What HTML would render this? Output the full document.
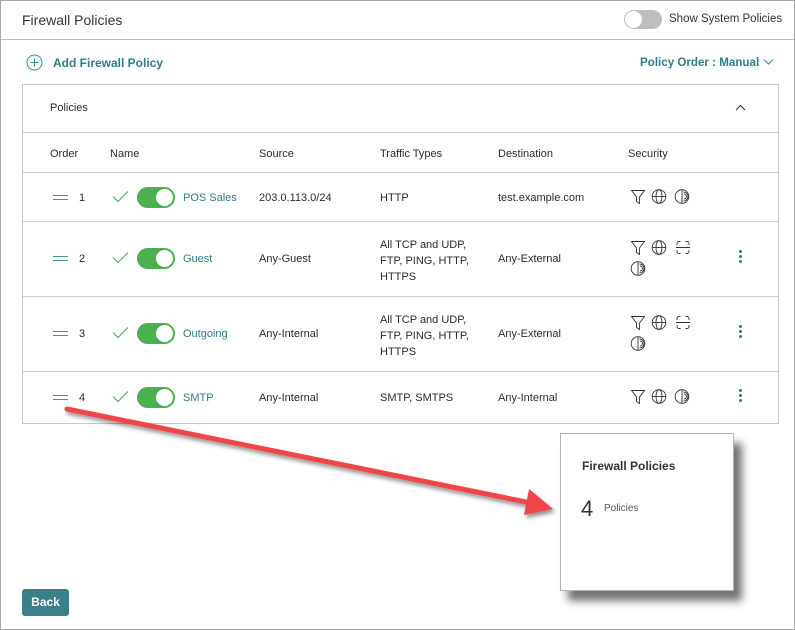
<!DOCTYPE html>
<html><head><meta charset="utf-8"><style>
*{margin:0;padding:0;box-sizing:border-box}
body{width:795px;height:630px;position:relative;background:#fff;font-family:"Liberation Sans",sans-serif;color:#2b2b2b;overflow:hidden}
.frame{position:absolute;left:0;top:0;width:795px;height:630px;border:1px solid #a8a8a8}
.a{position:absolute;white-space:nowrap}
.t{font-size:11px}
.teal{color:#2f7d88}
.hl{position:absolute;height:1px;background:#cfcfcf}
.tog{position:absolute;width:38px;height:21px;border-radius:11px;background:#4caf50}
.tog::after{content:"";position:absolute;right:2px;top:2px;width:17px;height:17px;border-radius:50%;background:#fff}
.drag{position:absolute;width:15px;height:5px;border-top:1.5px solid #4a94a0;border-bottom:1.5px solid #4a94a0}
.dots{position:absolute;width:3px}
.dots i{display:block;width:3px;height:3px;border-radius:50%;background:#2f7d88;margin-bottom:2px}
</style></head><body>
<div class="frame"></div>
<div class="a" style="left:22px;top:12px;font-size:14px;color:#333">Firewall Policies</div>
<div style="position:absolute;left:624px;top:10px;width:38px;height:19px;border-radius:10px;background:#bdbdbd"><div style="position:absolute;left:1px;top:1px;width:17px;height:17px;border-radius:50%;background:#fff"></div></div>
<div class="a t" style="left:669px;top:13px;font-size:11.5px;color:#333">Show System Policies</div>
<div class="hl" style="left:1px;top:39px;width:793px;background:#bdbdbd"></div>

<svg class="a" style="left:26px;top:54px" width="17" height="17"><circle cx="8.5" cy="8.5" r="7.5" fill="none" stroke="#3a8a95" stroke-width="1"/><path d="M8.5 4.5v8M4.5 8.5h8" stroke="#3a8a95" stroke-width="1"/></svg>
<div class="a teal" style="left:53px;top:56px;font-size:12px;font-weight:bold">Add Firewall Policy</div>
<div class="a teal" style="left:640px;top:56px;font-size:11.6px;font-weight:bold">Policy Order : Manual</div>
<svg class="a" style="left:763px;top:58px" width="11" height="8"><path d="M1 1.5l4.5 4.5 4.5-4.5" fill="none" stroke="#3a8a95" stroke-width="1.1"/></svg>

<div style="position:absolute;left:22px;top:84px;width:757px;height:340px;border:1px solid #c8c8c8"></div>
<div class="a t" style="left:50px;top:102px">Policies</div>
<svg class="a" style="left:735px;top:104px" width="11" height="8"><path d="M1 6l4.5-4.5 4.5 4.5" fill="none" stroke="#333" stroke-width="1.1"/></svg>
<div class="hl" style="left:23px;top:132px;width:755px"></div>
<div class="a t" style="left:50px;top:148px">Order</div>
<div class="a t" style="left:110px;top:148px">Name</div>
<div class="a t" style="left:259px;top:148px">Source</div>
<div class="a t" style="left:380px;top:148px">Traffic Types</div>
<div class="a t" style="left:498px;top:148px">Destination</div>
<div class="a t" style="left:628px;top:148px">Security</div>
<div class="hl" style="left:23px;top:172px;width:755px"></div>
<div class="hl" style="left:23px;top:221px;width:755px"></div>
<div class="hl" style="left:23px;top:296px;width:755px"></div>
<div class="hl" style="left:23px;top:371px;width:755px"></div>

<svg width="0" height="0" style="position:absolute"><defs>
<g id="fn"><path d="M1.5 2.5h13l-5 6.5v6.5l-3-2v-4.5z" fill="none" stroke="#333" stroke-width="0.9"/></g>
<g id="gl"><circle cx="8" cy="8.5" r="6.8" fill="none" stroke="#333" stroke-width="0.9"/><ellipse cx="8" cy="8.5" rx="3" ry="6.8" fill="none" stroke="#333" stroke-width="0.9"/><path d="M1.2 8.5h13.6" stroke="#333" stroke-width="0.9"/></g>
<g id="sh"><circle cx="8" cy="8.5" r="6.8" fill="none" stroke="#333" stroke-width="0.9"/><path d="M8 1.7v13.6M9.5 4a4.5 4.5 0 0 1 0 9M10 6a2.5 2.5 0 0 1 0 5" fill="none" stroke="#333" stroke-width="0.9"/></g>
<g id="br"><path d="M2 6v-1.5a2 2 0 0 1 2-2h1.5M10.5 2.5h1.5a2 2 0 0 1 2 2v1.5M2 11v1.5a2 2 0 0 0 2 2h1.5M10.5 14.5h1.5a2 2 0 0 0 2-2v-1.5M1 8.5h14" fill="none" stroke="#333" stroke-width="0.9"/></g>
</defs></svg>

<!-- row1 -->
<div class="drag" style="left:53px;top:195px"></div>
<div class="a t" style="left:79px;top:192px">1</div>
<svg class="a" style="left:112px;top:190px" width="17" height="13"><path d="M1 6.5l5 5 10-10" fill="none" stroke="#4caf50" stroke-width="1.1"/></svg>
<div class="tog" style="left:137px;top:187px"></div>
<div class="a t teal" style="left:183px;top:192px">POS Sales</div>
<div class="a t" style="left:259px;top:192px">203.0.113.0/24</div>
<div class="a t" style="left:380px;top:192px">HTTP</div>
<div class="a t" style="left:498px;top:192px">test.example.com</div>
<svg class="a" style="left:630px;top:188px" width="65" height="18"><use href="#fn"/><use href="#gl" x="21"/><use href="#sh" x="44"/></svg>

<!-- row2 -->
<div class="drag" style="left:53px;top:256px"></div>
<div class="a t" style="left:79px;top:253px">2</div>
<svg class="a" style="left:112px;top:251px" width="17" height="13"><path d="M1 6.5l5 5 10-10" fill="none" stroke="#4caf50" stroke-width="1.1"/></svg>
<div class="tog" style="left:137px;top:248px"></div>
<div class="a t teal" style="left:183px;top:253px">Guest</div>
<div class="a t" style="left:259px;top:253px">Any-Guest</div>
<div class="a t" style="left:380px;top:237px;line-height:16px">All TCP and UDP,<br>FTP, PING, HTTP,<br>HTTPS</div>
<div class="a t" style="left:498px;top:253px">Any-External</div>
<svg class="a" style="left:630px;top:239px" width="65" height="18"><use href="#fn"/><use href="#gl" x="21"/><use href="#br" x="45"/></svg>
<svg class="a" style="left:630px;top:260px" width="18" height="18"><use href="#sh"/></svg>
<div class="dots" style="left:739px;top:250px"><i></i><i></i><i></i></div>

<!-- row3 -->
<div class="drag" style="left:53px;top:331px"></div>
<div class="a t" style="left:79px;top:328px">3</div>
<svg class="a" style="left:112px;top:326px" width="17" height="13"><path d="M1 6.5l5 5 10-10" fill="none" stroke="#4caf50" stroke-width="1.1"/></svg>
<div class="tog" style="left:137px;top:323px"></div>
<div class="a t teal" style="left:183px;top:328px">Outgoing</div>
<div class="a t" style="left:259px;top:328px">Any-Internal</div>
<div class="a t" style="left:380px;top:312px;line-height:16px">All TCP and UDP,<br>FTP, PING, HTTP,<br>HTTPS</div>
<div class="a t" style="left:498px;top:328px">Any-External</div>
<svg class="a" style="left:630px;top:314px" width="65" height="18"><use href="#fn"/><use href="#gl" x="21"/><use href="#br" x="45"/></svg>
<svg class="a" style="left:630px;top:335px" width="18" height="18"><use href="#sh"/></svg>
<div class="dots" style="left:739px;top:325px"><i></i><i></i><i></i></div>

<!-- row4 -->
<div class="drag" style="left:53px;top:395px"></div>
<div class="a t" style="left:79px;top:392px">4</div>
<svg class="a" style="left:112px;top:390px" width="17" height="13"><path d="M1 6.5l5 5 10-10" fill="none" stroke="#4caf50" stroke-width="1.1"/></svg>
<div class="tog" style="left:137px;top:387px"></div>
<div class="a t teal" style="left:183px;top:392px">SMTP</div>
<div class="a t" style="left:259px;top:392px">Any-Internal</div>
<div class="a t" style="left:380px;top:392px">SMTP, SMTPS</div>
<div class="a t" style="left:498px;top:392px">Any-Internal</div>
<svg class="a" style="left:630px;top:388px" width="65" height="18"><use href="#fn"/><use href="#gl" x="21"/><use href="#sh" x="44"/></svg>
<div class="dots" style="left:739px;top:389px"><i></i><i></i><i></i></div>

<!-- card -->
<div style="position:absolute;left:560px;top:433px;width:174px;height:158px;background:#fff;border:1px solid #b5b5b5;box-shadow:8px 10px 8px rgba(0,0,0,0.55)"></div>
<div class="a" style="left:582px;top:459px;font-size:12px;font-weight:bold;color:#333">Firewall Policies</div>
<div class="a" style="left:581px;top:496px;font-size:22px;color:#333">4</div>
<div class="a" style="left:604px;top:503px;font-size:10px;color:#555">Policies</div>

<!-- arrow -->
<svg class="a" style="left:0;top:0" width="795" height="630">
<defs><filter id="s" x="-10%" y="-50%" width="120%" height="200%"><feDropShadow dx="2" dy="3" stdDeviation="2" flood-color="#000" flood-opacity="0.45"/></filter></defs>
<g filter="url(#s)">
<path d="M67 409 L531 503" stroke="#f0444a" stroke-width="5" stroke-linecap="round"/>
<path d="M553 509 L529 489 L524 515 Z" fill="#f0444a"/>
</g></svg>

<div class="a" style="left:22px;top:589px;width:47px;height:27px;background:#3a7f89;border-radius:3px;color:#fff;font-size:12px;font-weight:bold;text-align:center;line-height:27px">Back</div>
</body></html>
